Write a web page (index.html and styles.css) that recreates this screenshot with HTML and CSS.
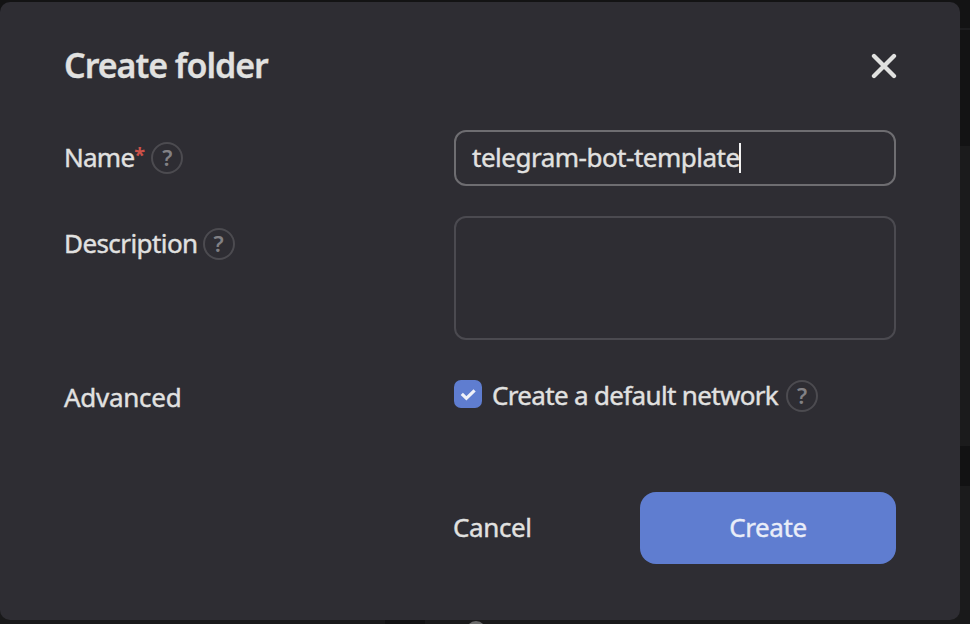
FILE: index.html
```html
<!DOCTYPE html>
<html lang="en">
<head>
<meta charset="utf-8">
<title>Create folder</title>
<link rel="stylesheet" href="styles.css">
</head>
<body>
<div class="backdrop-side"></div>
<div class="backdrop-bottom"><span class="backdrop-dot"></span></div>
<main class="dialog" role="dialog" aria-label="Create folder">
  <header class="header">
    <h1 class="title">Create folder</h1>
    <button class="close" type="button" aria-label="Close">
      <svg width="26" height="26" viewBox="0 0 26 26" fill="none" stroke="currentColor" stroke-width="4.3" stroke-linecap="round"><path d="M3 3 23 23M23 3 3 23"/></svg>
    </button>
  </header>
  <form class="form">
    <div class="row row-name">
      <div class="label"><span class="text t-name">Name</span><span class="required">*</span><span class="help">?</span></div>
      <div class="input"><span class="text t-value">telegram-bot-template</span><span class="caret"></span></div>
    </div>
    <div class="row row-description">
      <div class="label"><span class="text t-description">Description</span><span class="help">?</span></div>
      <div class="textarea"></div>
    </div>
    <div class="row row-advanced">
      <div class="label"><span class="text t-advanced">Advanced</span></div>
      <div class="option">
        <span class="checkbox"><svg width="28" height="28" viewBox="0 0 28 28" fill="none" stroke="currentColor" stroke-width="3.2"><path d="m7.8 13.8 4.6 4.5 8.2-7.9"/></svg></span>
        <span class="text t-network">Create a default network</span><span class="help">?</span>
      </div>
    </div>
    <footer class="footer">
      <button class="cancel" type="button"><span class="text t-cancel">Cancel</span></button>
      <button class="create" type="button"><span class="text t-create">Create</span></button>
    </footer>
  </form>
</main>
</body>
</html>
```

FILE: styles.css
```css
* { box-sizing: border-box; }
body {
  margin: 0;
  width: 970px;
  height: 624px;
  padding-top: 2px;
  overflow: hidden;
  background: #131314;
  color: #e1e1e0;
  font: 26px/36px "Noto Sans", sans-serif;
}
.backdrop-side {
  position: absolute;
  right: 0;
  top: 0;
  width: 20px;
  height: 624px;
  background: linear-gradient(#131314 28px, #1d1d1f 28px 30px, #131314 30px 146px, #1b1b1c 146px 446px, #121213 446px 486px, #1b1b1c 486px);
}
.backdrop-bottom {
  position: absolute;
  left: 0;
  bottom: 0;
  width: 970px;
  height: 14px;
  overflow: hidden;
  background: linear-gradient(90deg, #19191a 385px, #111112 385px 425px, #19191a 425px);
}
.backdrop-dot {
  position: absolute;
  left: 466px;
  top: 11px;
  width: 20px;
  height: 20px;
  border-radius: 50%;
  background: #6b6b6b;
}
.dialog {
  position: relative;
  width: 960px;
  height: 618px;
  padding: 40px 64px 56px;
  border-radius: 10px;
  background: #2e2d33;
}
.header { display: flex; justify-content: space-between; align-items: center; height: 48px; }
.title { margin: 0; padding-bottom: 2px; font-size: 34px; line-height: 46px; font-weight: 600; letter-spacing: -1.03px; white-space: nowrap; -webkit-text-stroke: .3px; }
button { padding: 0; border: 0; background: none; color: inherit; font: inherit; }
.close { display: flex; width: 26px; height: 26px; margin-right: -1px; }
.form { padding-top: 40px; }
.row { display: grid; grid-template-columns: 390px 442px; }
.row-name { height: 86px; }
.row-description { height: 162px; }
.row-advanced { height: 114px; }
.label { display: flex; align-items: center; height: 56px; white-space: nowrap; }
.row-advanced .label { height: 40px; }
.text { padding-bottom: 2px; -webkit-text-stroke: .4px; }
.required { width: 10px; padding-bottom: 6px; color: #cb5149; font-size: 20px; font-weight: 700; line-height: 30px; }
.help {
  flex: none;
  width: 32px;
  height: 32px;
  margin-left: 5px;
  border: 2px solid #4c4b50;
  border-radius: 50%;
  color: #828185;
  font-size: 22px;
  font-weight: 600;
  line-height: 27px;
  text-align: center;
}
.required + .help { margin-left: 7px; }
.input {
  display: flex;
  align-items: center;
  height: 56px;
  padding-left: 16px;
  border: 2px solid #6e6d71;
  border-radius: 12px;
  white-space: nowrap;
}
.caret { width: 2px; height: 30px; margin-left: -1px; background: #f2f2f2; }
.textarea { height: 124px; border: 2px solid #4b4a50; border-radius: 12px; }
.option { display: flex; align-items: center; height: 32px; margin-top: -2px; padding-top: 4px; height: 34px; white-space: nowrap; }
.option .text { padding-bottom: 0; }
.option .help { margin-top: 2px; margin-left: 8px; }
.checkbox { flex: none; width: 28px; height: 28px; margin: -2px 10px 0 0; border-radius: 7px; background: #5f7dd0; color: #f0f1f8; }
.checkbox svg { display: block; }
.footer { display: flex; justify-content: space-between; height: 72px; padding-left: 389px; }
.cancel .text, .create .text { display: block; }
.create { width: 256px; height: 72px; border-radius: 16px; background: #5f7dd0; color: #e9edf8; }
.t-name { letter-spacing: -.75px; }
.t-value { letter-spacing: -.5px; }
.t-description { letter-spacing: -.58px; }
.t-advanced { letter-spacing: -.28px; }
.t-network { letter-spacing: -.67px; }
.t-cancel { letter-spacing: -.4px; }
.t-create { letter-spacing: -.4px; }
```
